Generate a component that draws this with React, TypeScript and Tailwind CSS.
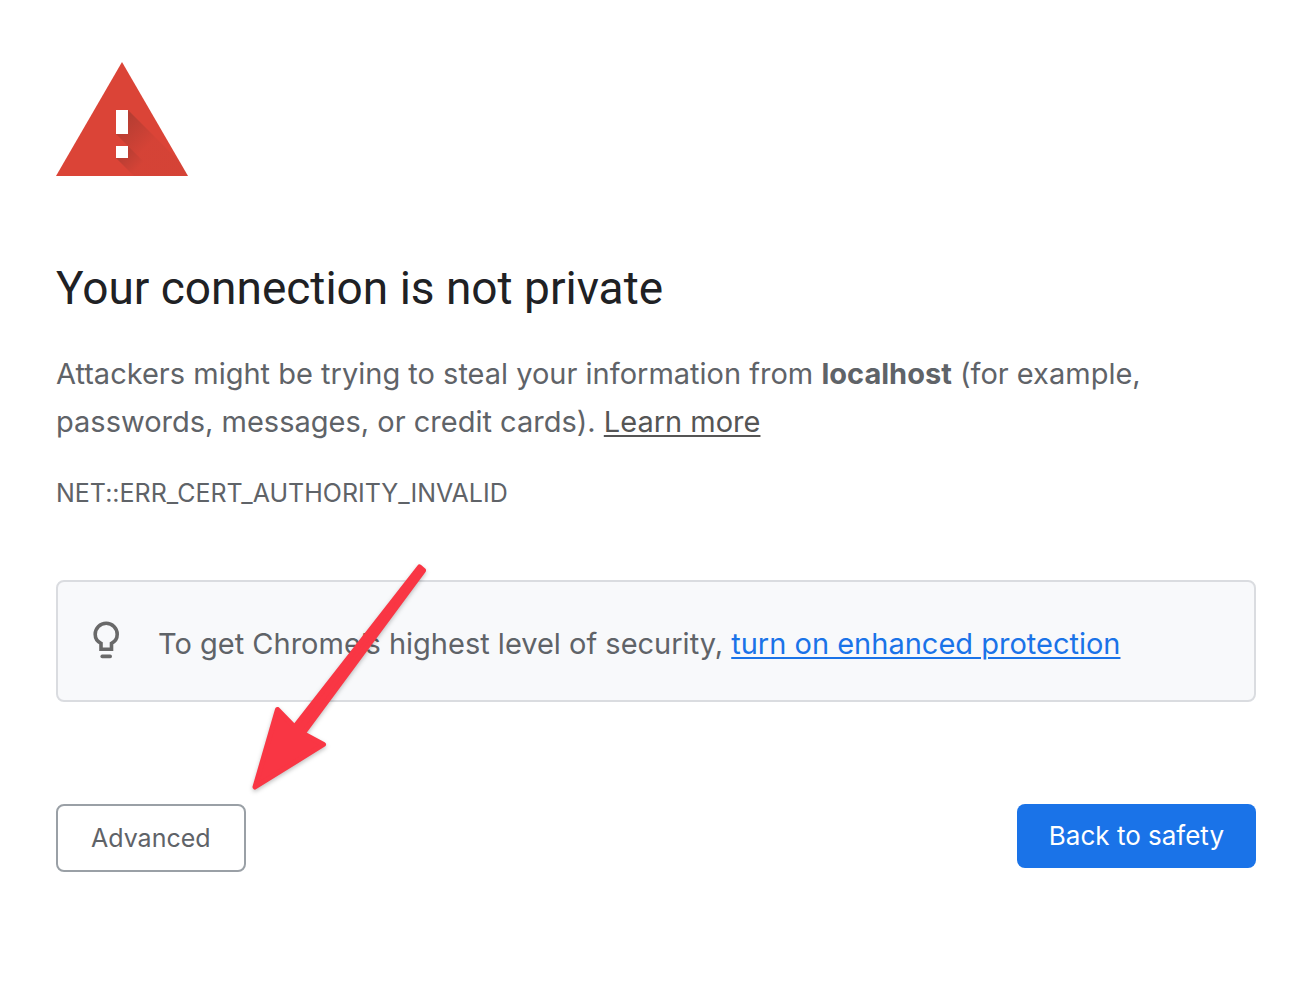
export default function App() {
  return (
    <main className="min-h-screen bg-white px-12 pt-[62px] pb-28 pl-14 font-['Inter','Liberation_Sans',sans-serif] text-[#5f6368]">
      <svg className="block h-[114px] w-[132px]" viewBox="0 0 132 114" role="img" aria-label="Warning">
        <defs>
          <linearGradient id="bar-shade" x1="66" y1="60" x2="91" y2="85" gradientUnits="userSpaceOnUse">
            <stop offset="0" stopColor="#3e2723" stopOpacity="0.24" />
            <stop offset="1" stopColor="#3e2723" stopOpacity="0.04" />
          </linearGradient>
          <linearGradient id="dot-shade" x1="66" y1="90" x2="82" y2="106" gradientUnits="userSpaceOnUse">
            <stop offset="0" stopColor="#3e2723" stopOpacity="0.24" />
            <stop offset="1" stopColor="#3e2723" stopOpacity="0.04" />
          </linearGradient>
        </defs>
        <path d="M0 114 66 0l66 114Z" fill="#db4437" />
        <path d="M72 48 124 100 132 114H102L60 72h12Z" fill="url(#bar-shade)" />
        <path d="M72 84 102 114H78L60 96h12Z" fill="url(#dot-shade)" />
        <path d="M60 48h12v24H60ZM60 84h12v12H60Z" fill="#fff" />
      </svg>
      <h1 className="mt-[83px] font-['Roboto','Liberation_Sans',sans-serif] text-[46px] leading-[58px] text-[#202124]">
        Your connection is not private
      </h1>
      <p className="mt-[33px] text-[29px] leading-12">
        Attackers might be trying to steal your information from <strong>localhost</strong> (for example, passwords,
        messages, or credit cards).{" "}
        <a href="#learn-more" className="text-[#555555] underline decoration-2 underline-offset-[3px]">
          Learn more
        </a>
      </p>
      <p className="mt-7 text-[25px] leading-[38px] [font-variant-ligatures:no-contextual]">
        NET::ERR_CERT_AUTHORITY_INVALID
      </p>
      <section className="relative mt-[68px] flex items-start rounded-lg border-2 border-[#dadce0] bg-[#f8f9fb] pt-[38px] pr-8 pb-8 pl-7">
        <svg className="block h-10 w-10 shrink-0" viewBox="0 0 40 40" aria-hidden="true">
          <path
            d="M20.2 3.300A11 11 0 0 0 9.200 14.300c0 4 2 7.200 5.800 9v6h10.500v-6c3.700-1.800 5.700-5 5.700-9A11 11 0 0 0 20.200 3.300Z"
            fill="none"
            stroke="#696969"
            strokeWidth="3.600"
          />
          <path d="M16.200 36.400h8" stroke="#696969" strokeWidth="3.600" strokeLinecap="round" />
        </svg>
        <p className="ml-8 text-[29px] leading-12">
          To get Chrome’s highest level of security,{" "}
          <a href="#enhanced-protection" className="text-[#1a73e8] underline decoration-2 underline-offset-[3px]">
            turn on enhanced protection
          </a>
        </p>
        <svg
          className="pointer-events-none absolute top-[-32px] left-[182px] h-[260px] w-[200px] drop-shadow-[0_2px_2px_rgba(0,0,0,0.25)]"
          viewBox="0 0 200 260"
          aria-hidden="true"
        >
          <path
            d="M179.500 17 183.500 20.500 63 183.500 83.500 194.500 15 237 37.500 159.500 54.500 177Z"
            fill="#f93644"
            stroke="#f93644"
            strokeWidth="5"
            strokeLinejoin="round"
          />
        </svg>
      </section>
      <div className="mt-[102px] flex items-start justify-between">
        <button type="button" className="rounded-lg border-2 border-[#9aa0a6] px-[33px] py-4 text-[25px] leading-8">
          Advanced
        </button>
        <button type="button" className="rounded-lg bg-[#1a73e8] px-8 py-4 text-[26px] leading-8 text-white">
          Back to safety
        </button>
      </div>
    </main>
  );
}
